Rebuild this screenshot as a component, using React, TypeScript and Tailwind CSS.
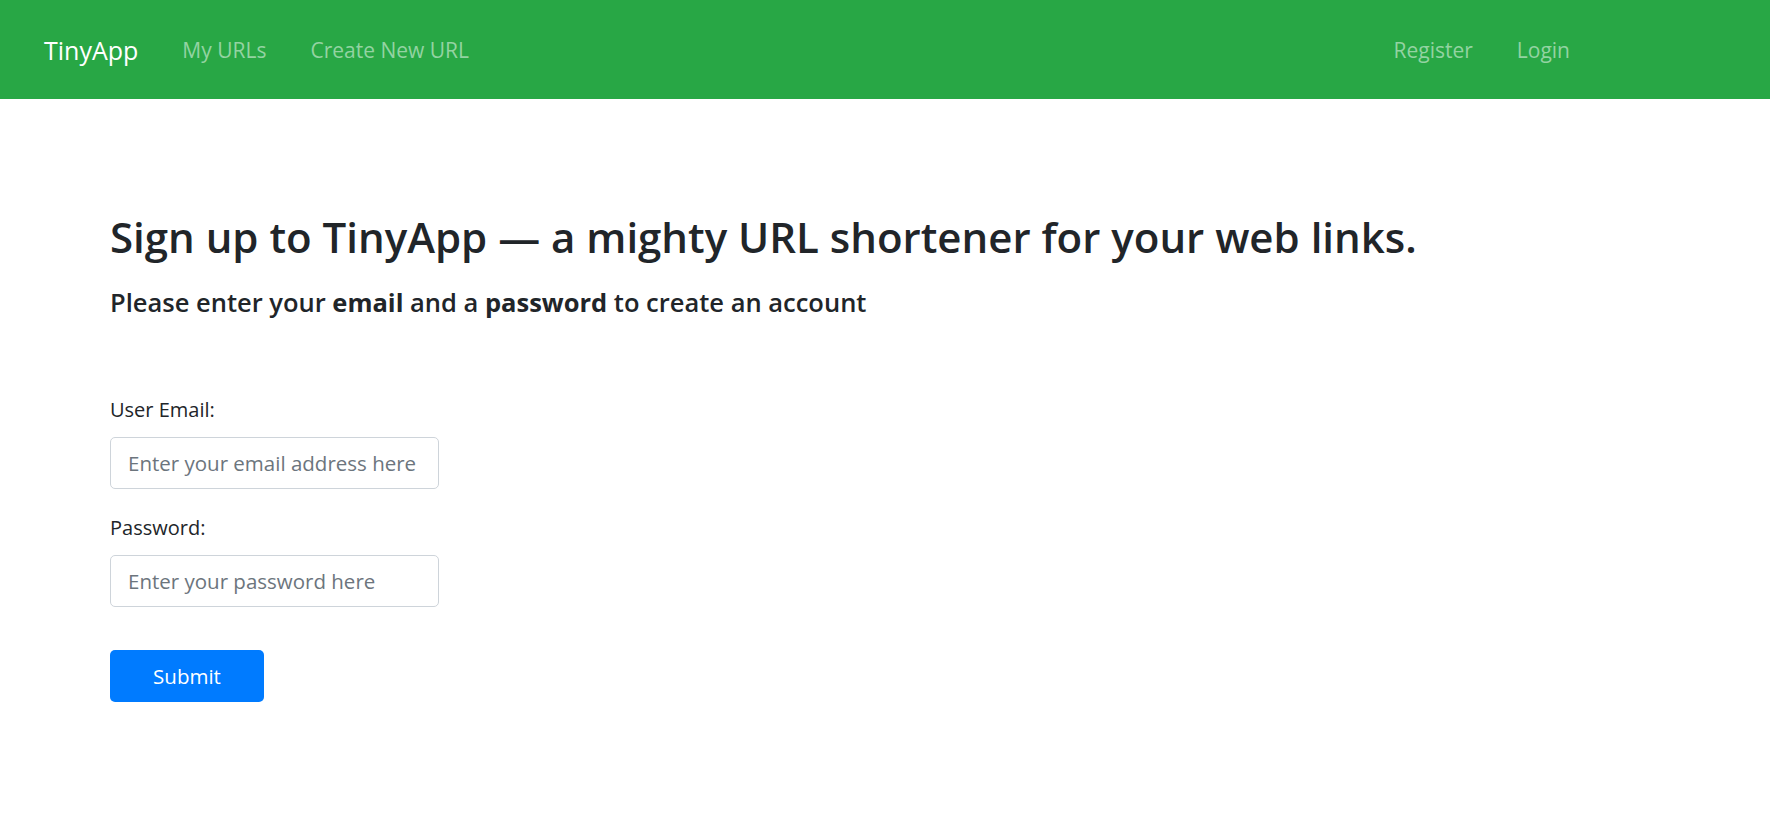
export default function App() {
  const font = { fontFamily: '"Open Sans", "Noto Sans", sans-serif' };
  return (
    <div className="min-h-screen bg-white text-[#212529]" style={font}>
      <nav className="h-[99px] bg-[#28a745] flex items-center pt-[2px] pl-[44px] pr-[200px]">
        <a className="text-white text-[25px] leading-none mr-[44px]">TinyApp</a>
        <div className="flex items-center gap-[44px] text-[21px] leading-none text-[#93d3a2]">
          <a>My URLs</a>
          <a>Create New URL</a>
        </div>
        <div className="ml-auto flex items-center gap-[44px] text-[21px] leading-none text-[#93d3a2]">
          <a>Register</a>
          <a>Login</a>
        </div>
      </nav>
      <main className="pl-[110px]">
        <h1 className="mt-[111px] text-[42px] leading-[54px] font-semibold">
          Sign up to TinyApp — a mighty URL shortener for your web links.
        </h1>
        <h2 className="mt-[23px] text-[25.5px] leading-[30px] font-semibold">
          Please enter your <b className="font-bold">email</b> and a <b className="font-bold">password</b> to create an account
        </h2>
        <form className="mt-[76px] flex flex-col">
          <label className="text-[20px] leading-[33px]">User Email:</label>
          <input
            className="mt-[11px] w-[329px] h-[52px] border border-[#ced4da] rounded-[5px] px-[17px] text-[20.5px] placeholder:text-[#6c757d] outline-none"
            placeholder="Enter your email address here"
          />
          <label className="mt-[22px] text-[20px] leading-[33px]">Password:</label>
          <input
            type="password"
            className="mt-[11px] w-[329px] h-[52px] border border-[#ced4da] rounded-[5px] px-[17px] text-[20.5px] placeholder:text-[#6c757d] outline-none"
            placeholder="Enter your password here"
          />
          <button
            type="button"
            className="mt-[43px] w-[154px] h-[52px] bg-[#007bff] rounded-[5px] text-white text-[20.5px]"
          >
            Submit
          </button>
        </form>
      </main>
    </div>
  );
}
